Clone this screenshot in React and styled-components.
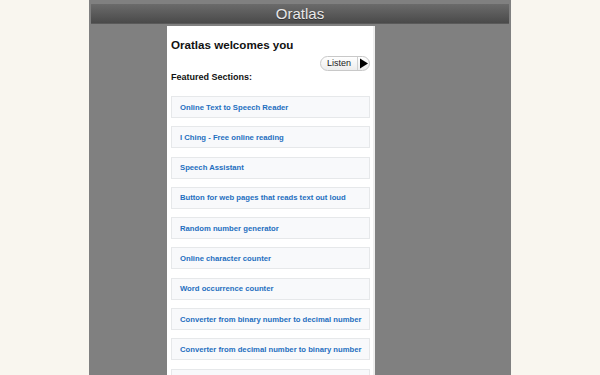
import React from 'react';
import styled, { createGlobalStyle } from 'styled-components';

const Global = createGlobalStyle`
  html, body { margin: 0; padding: 0; background: #f9f6ef; }
  body { font-family: "Liberation Sans", Arial, sans-serif; }
`;

const Column = styled.div`
  width: 422px;
  min-height: 375px;
  margin: 0 0 0 89px;
  background: #808080;
  padding-top: 4px;
  box-sizing: border-box;
  overflow: hidden;
`;

const Header = styled.header`
  margin: 0 2px;
  height: 19px;
  background: linear-gradient(#6b6b6b, #4a4a4a);
  border-bottom: 1px solid #5a5a5a;
  display: flex;
  align-items: center;
  justify-content: center;
  color: #e8e8e8;
  font-size: 15px;
  text-shadow: 0 1px 0 #333;
`;

const Card = styled.main`
  width: 208px;
  margin: 2px 0 0 78px;
  background: #fff;
  border-right: 2px solid #eeeeee;
  box-sizing: border-box;
  padding: 11px 3px 0 4px;
  min-height: 360px;
`;

const Title = styled.h1`
  margin: 0;
  font-size: 11.6px;
  font-weight: bold;
  color: #111;
  line-height: 15px;
`;

const Row = styled.div`
  display: flex;
  justify-content: flex-end;
  margin-top: 4px;
`;

const ListenButton = styled.button`
  display: flex;
  align-items: center;
  height: 15px;
  width: 50px;
  padding: 0;
  border: 1px solid #c8c8c8;
  border-radius: 8px;
  background: linear-gradient(#ffffff, #ececec);
  font-family: inherit;
  font-size: 9px;
  color: #222;
  box-sizing: border-box;
  overflow: hidden;
`;

const ListenText = styled.span`
  flex: 1;
  text-align: center;
  border-right: 1px solid #d0d0d0;
  line-height: 13px;
`;

const Play = styled.svg`
  width: 11px;
  height: 13px;
  flex: none;
`;

const Subtitle = styled.h2`
  margin: 0;
  font-size: 9px;
  font-weight: bold;
  color: #111;
  line-height: 12px;
`;

const List = styled.ul`
  list-style: none;
  margin: 13px 0 0;
  padding: 0;
  display: flex;
  flex-direction: column;
  gap: 8.3px;
`;

const Item = styled.li`
  height: 22px;
  box-sizing: border-box;
  border: 1px solid #e6e8ea;
  background: #f8f9fb;
  display: flex;
  align-items: center;
  padding-left: 8px;
`;

const Link = styled.a`
  color: #1f6fbf;
  font-size: 7.7px;
  font-weight: bold;
  text-decoration: none;
  white-space: nowrap;
`;

const sections = [
  'Online Text to Speech Reader',
  'I Ching - Free online reading',
  'Speech Assistant',
  'Button for web pages that reads text out loud',
  'Random number generator',
  'Online character counter',
  'Word occurrence counter',
  'Converter from binary number to decimal number',
  'Converter from decimal number to binary number',
];

export default function App() {
  return (
    <>
      <Global />
      <Column>
        <Header>Oratlas</Header>
        <Card>
          <Title>Oratlas welcomes you</Title>
          <Row>
            <ListenButton>
              <ListenText>Listen</ListenText>
              <Play viewBox="0 0 11 13">
                <polygon points="2,1.5 10,6.5 2,11.5" fill="#000" />
              </Play>
            </ListenButton>
          </Row>
          <Subtitle>Featured Sections:</Subtitle>
          <List>
            {sections.map((s) => (
              <Item key={s}>
                <Link href="#">{s}</Link>
              </Item>
            ))}
            <Item />
          </List>
        </Card>
      </Column>
    </>
  );
}
